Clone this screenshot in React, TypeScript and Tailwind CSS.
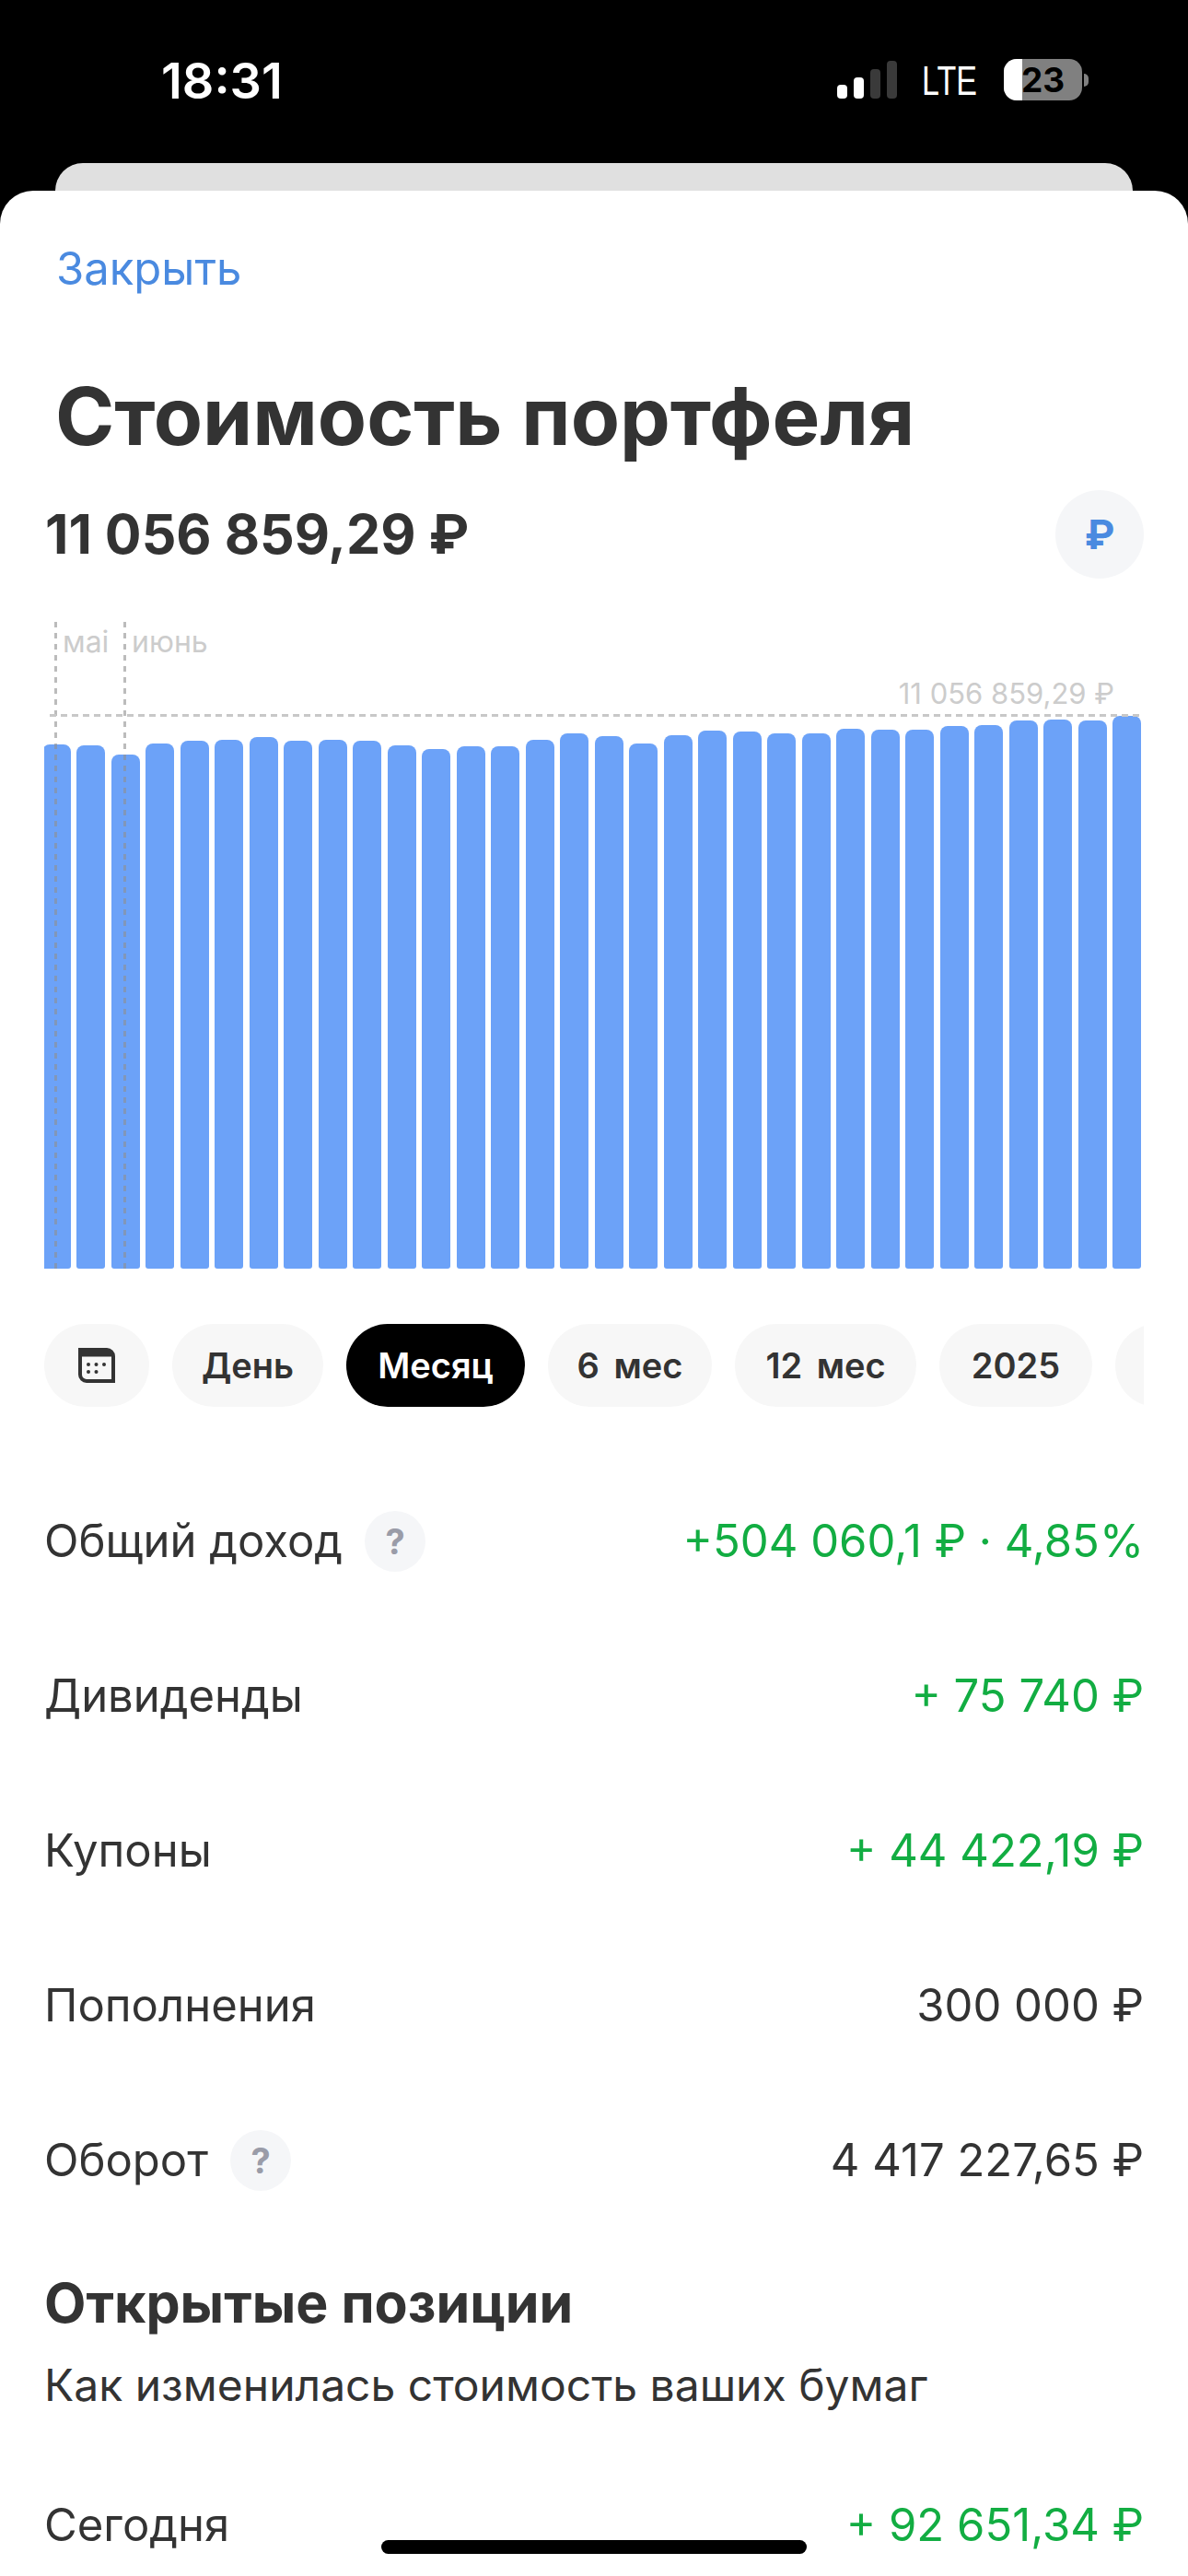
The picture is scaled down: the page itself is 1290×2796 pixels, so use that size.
const barTops = [
  808, 809, 819, 807, 804, 803, 800, 804, 803, 804, 809, 813, 810, 810, 803, 796, 799, 807, 798, 793, 794, 796, 796,
  791, 792, 792, 788, 787, 782, 781, 782, 777,
];

const stats = [
  { label: "Общий доход", value: "+504 060,1 ₽ · 4,85%", green: true, help: true },
  { label: "Дивиденды", value: "+ 75 740 ₽", green: true },
  { label: "Купоны", value: "+ 44 422,19 ₽", green: true },
  { label: "Пополнения", value: "300 000 ₽" },
  { label: "Оборот", value: "4 417 227,65 ₽", help: true },
];

const periods = [
  { label: "День", width: "w-[164px]" },
  { label: "Месяц", width: "w-[194px]" },
  { label: "6 мес", width: "w-[178px]" },
  { label: "12 мес", width: "w-[197px]" },
  { label: "2025", width: "w-[166px]" },
];

function App() {
  return (
    <div className="relative h-[2796px] w-[1290px] overflow-hidden bg-black font-['Inter','Liberation_Sans',sans-serif] text-[#333333]">
      <div className="flex h-[177px] items-start justify-between pl-[175px] pr-[108px] pt-[58px] text-white">
        <span className="text-[54px] font-semibold leading-[60px]">18:31</span>
        <div className="flex items-center pt-[6px]">
          <div className="flex items-end gap-[7px]">
            <div className="h-[15px] w-[11px] rounded-[4px] bg-white" />
            <div className="h-[23px] w-[11px] rounded-[4px] bg-white" />
            <div className="h-[32px] w-[11px] rounded-[4px] bg-[#3a3a3a]" />
            <div className="h-[41px] w-[11px] rounded-[4px] bg-[#3a3a3a]" />
          </div>
          <span className="ml-[27px] w-[62px] scale-y-[1.32] font-['Liberation_Sans'] text-[34px] leading-[44px]">LTE</span>
          <div className="relative ml-[27px] h-[45px] w-[85px] overflow-hidden rounded-[14px] bg-[#808080] text-center text-[37px] font-bold leading-[45px] text-black">
            <div className="absolute inset-y-0 left-0 w-[20px] bg-white" />
            <span className="relative">23</span>
          </div>
          <div className="ml-[2px] h-[14px] w-[5px] rounded-r-full bg-[#808080]" />
        </div>
      </div>

      <div className="mx-[60px] h-[60px] rounded-t-[30px] bg-[#e0e0e0]" />

      <div className="absolute inset-x-0 top-[207px] h-[2589px] rounded-t-[36px] bg-white">
        <div className="pl-[61px] pt-[57px] text-[49px] leading-[56px] text-[#4a8ae0]">Закрыть</div>
        <h1 className="pl-[60px] pt-[82px] text-[87px] font-bold leading-[100px] text-[#333333]">Стоимость портфеля</h1>

        <div className="flex items-center justify-between pl-[49px] pr-[48px] pt-[30px]">
          <span className="text-[59px] font-bold leading-[96px]">11 056 859,29 ₽</span>
          <div className="flex h-[96px] w-[96px] items-center justify-center rounded-full bg-[#f5f6f8] text-[44px] font-bold text-[#4a8ae0]">
            ₽
          </div>
        </div>

        <div className="relative mx-[48px] mt-[47px] h-[702px] overflow-hidden">
          {barTops.map((top, i) => (
            <div
              key={i}
              className="absolute bottom-0 w-[31px] rounded-t-[8px] rounded-b-[3px] bg-[#6ca2f8]"
              style={{ height: 1377 - top, left: i * 37.5 - 2.5 }}
            />
          ))}

          <div className="absolute bottom-0 left-[11px] top-0 w-[3px] bg-[repeating-linear-gradient(to_bottom,#8f8f8f99_0,#8f8f8f99_6px,transparent_6px,transparent_12px)]" />
          <div className="absolute bottom-0 left-[86px] top-0 w-[3px] bg-[repeating-linear-gradient(to_bottom,#8f8f8f99_0,#8f8f8f99_6px,transparent_6px,transparent_12px)]" />
          <span className="absolute left-[20px] top-[2px] text-[32px] leading-[40px] text-[#cccccc]">маі</span>
          <span className="absolute left-[95px] top-[2px] text-[32px] leading-[40px] text-[#cccccc]">июнь</span>
          <span className="absolute right-[32px] top-[58px] text-[31px] leading-[40px] text-[#cccccc]">11 056 859,29 ₽</span>
          <div className="absolute left-[6px] right-0 top-[100px] h-[3px] bg-[repeating-linear-gradient(to_right,#c8c8c8_0,#c8c8c8_7px,transparent_7px,transparent_12px)]" />
        </div>

        <div className="ml-[48px] mt-[60px] flex w-[1194px] items-center gap-[25px] overflow-hidden">
          <div className="flex h-[90px] w-[114px] shrink-0 items-center justify-center rounded-full bg-[#f7f7f7]">
            <svg width="40" height="38" viewBox="0 0 40 38">
              <path
                d="M0 0h31a9 9 0 0 1 9 9v29H9a9 9 0 0 1-9-9z M4 9.5V29a5 5 0 0 0 5 5h27V9.5z"
                fill="#333333"
                fillRule="evenodd"
              />
              <g fill="#333333">
                <circle cx="11" cy="18" r="2" />
                <circle cx="19.5" cy="18" r="2" />
                <circle cx="28" cy="18" r="2" />
                <circle cx="11" cy="26" r="2" />
                <circle cx="19.5" cy="26" r="2" />
              </g>
            </svg>
          </div>
          {periods.map((p) => (
            <div
              key={p.label}
              className={`flex h-[90px] shrink-0 items-center justify-center rounded-full text-[38px] font-semibold [word-spacing:6px] ${p.width} ${
                p.label === "Месяц" ? "bg-black text-white" : "bg-[#f7f7f7] text-[#333333]"
              }`}
            >
              {p.label}
            </div>
          ))}
          <div className="h-[90px] w-[100px] shrink-0 rounded-full bg-[#f7f7f7]" />
        </div>

        <div className="mt-[62px] flex flex-col px-[48px]">
          {stats.map((s) => (
            <div key={s.label} className="flex h-[168px] items-center justify-between text-[49px] leading-[60px]">
              <div className="flex items-center gap-[24px]">
                <span>{s.label}</span>
                {s.help && (
                  <div className="flex h-[66px] w-[66px] items-center justify-center rounded-full bg-[#f5f6f8] text-[38px] font-bold text-[#9a9ca8]">
                    ?
                  </div>
                )}
              </div>
              <span className={s.green ? "text-[#12ad42]" : ""}>{s.value}</span>
            </div>
          ))}
        </div>

        <div className="px-[48px]">
          <h2 className="pt-[36px] text-[59px] font-bold leading-[70px]">Открытые позиции</h2>
          <p className="pt-[26px] text-[48px] leading-[56px]">Как изменилась стоимость ваших бумаг</p>
          <div className="mt-[94px] flex items-center justify-between text-[49px] leading-[60px]">
            <span>Сегодня</span>
            <span className="text-[#12ad42]">+ 92 651,34 ₽</span>
          </div>
        </div>
      </div>

      <div className="absolute bottom-[24px] left-[414px] h-[15px] w-[462px] rounded-full bg-black" />
    </div>
  );
}

export default App;
